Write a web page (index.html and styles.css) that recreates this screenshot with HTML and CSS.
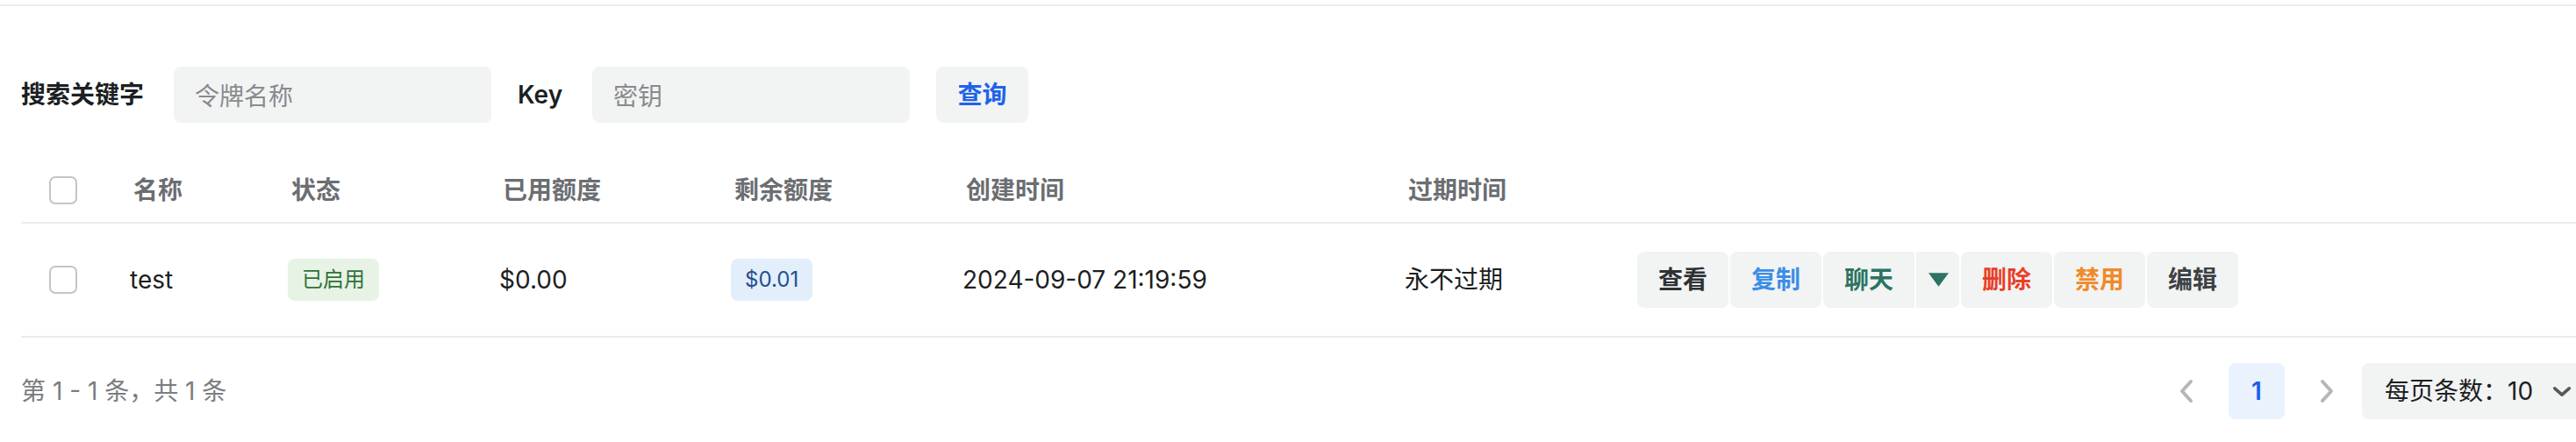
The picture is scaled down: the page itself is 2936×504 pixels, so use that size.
FILE: index.html
```html
<!DOCTYPE html>
<html lang="zh-CN">
<head>
<meta charset="utf-8">
<title>令牌</title>
<link rel="stylesheet" href="styles.css">
</head>
<body>
<div class="topline"></div>
<div class="page">
  <form class="search">
    <label class="search-label">搜索关键字</label>
    <div class="input"><span class="placeholder">令牌名称</span></div>
    <label class="search-label">Key</label>
    <div class="input"><span class="placeholder">密钥</span></div>
    <button type="button" class="btn btn-query">查询</button>
  </form>

  <div class="table">
    <div class="row head">
      <div class="cell"><span class="checkbox"></span></div>
      <div class="cell th">名称</div>
      <div class="cell th">状态</div>
      <div class="cell th">已用额度</div>
      <div class="cell th">剩余额度</div>
      <div class="cell th">创建时间</div>
      <div class="cell th">过期时间</div>
      <div class="cell th"></div>
    </div>
    <div class="row body">
      <div class="cell"><span class="checkbox"></span></div>
      <div class="cell">test</div>
      <div class="cell"><span class="tag tag-green">已启用</span></div>
      <div class="cell">$0.00</div>
      <div class="cell"><span class="tag tag-blue">$0.01</span></div>
      <div class="cell">2024-09-07 21:19:59</div>
      <div class="cell">永不过期</div>
      <div class="cell actions">
        <button type="button" class="btn c-view">查看</button>
        <button type="button" class="btn c-copy">复制</button>
        <button type="button" class="btn c-chat split-left">聊天</button>
        <button type="button" class="btn c-chat split-right"><svg class="tri" viewBox="0 0 24 16" width="23" height="16"><polygon points="0,0 24,0 12,16" fill="currentColor"/></svg></button>
        <button type="button" class="btn c-del">删除</button>
        <button type="button" class="btn c-disable">禁用</button>
        <button type="button" class="btn c-edit">编辑</button>
      </div>
    </div>
  </div>

  <div class="pager">
    <div class="pager-total">第 1 - 1 条，共 1 条</div>
    <div class="pager-right">
      <span class="page-item arrow"><svg viewBox="0 0 16 28" width="16" height="28"><polyline points="13,3 3,14 13,25" fill="none" stroke="currentColor" stroke-width="4" stroke-linecap="round" stroke-linejoin="round"/></svg></span>
      <span class="page-item current">1</span>
      <span class="page-item arrow"><svg viewBox="0 0 16 28" width="16" height="28"><polyline points="3,3 13,14 3,25" fill="none" stroke="currentColor" stroke-width="4" stroke-linecap="round" stroke-linejoin="round"/></svg></span>
      <div class="size-select">
        <span class="size-text">每页条数：10</span>
        <span class="size-arrow"><svg viewBox="0 0 24 14" width="22" height="13"><polyline points="3,3 12,11 21,3" fill="none" stroke="currentColor" stroke-width="4" stroke-linecap="round" stroke-linejoin="round"/></svg></span>
      </div>
    </div>
  </div>
</div>
</body>
</html>
```

FILE: styles.css
```css
html, body {
  margin: 0;
  padding: 0;
  background: #ffffff;
}
body {
  width: 2936px;
  height: 504px;
  overflow: hidden;
  font-family: "Inter", "Noto Sans CJK SC", sans-serif;
  font-size: 28px;
  color: #1c1f23;
}
.topline {
  margin-top: 5px;
  height: 2px;
  background: #ececec;
}
.page {
  width: 2928px;
  padding-left: 24px;
  box-sizing: content-box;
}

/* search form */
.search {
  display: flex;
  align-items: center;
  margin: 69px 0 0 0;
  height: 64px;
}
.search-label {
  font-weight: 600;
  color: #1c1f23;
  margin-right: 34px;
  line-height: 40px;
}
.input {
  width: 362px;
  height: 64px;
  box-sizing: border-box;
  background: #f2f3f3;
  border-radius: 8px;
  padding: 0 24px;
  display: flex;
  align-items: center;
  margin-right: 30px;
}
.placeholder {
  color: #888b8e;
}
.btn {
  font-family: inherit;
  font-size: 28px;
  font-weight: 600;
  height: 64px;
  border: none;
  background: #f2f3f3;
  border-radius: 8px;
  padding: 0 24px;
  display: inline-flex;
  align-items: center;
  justify-content: center;
  line-height: 40px;
  cursor: pointer;
}
.btn-query {
  color: #1f63ea;
  width: 105px;
}

/* table */
.table {
  margin-top: 41px;
}
.row {
  display: grid;
  grid-template-columns: 92px 180px 241px 264px 264px 504px 260px 1fr;
  align-items: center;
  padding-left: 32px;
  border-bottom: 2px solid #ececec;
}
.row.head {
  height: 72px;
}
.row.body {
  height: 128px;
}
.cell {
  display: flex;
  align-items: center;
  line-height: 40px;
  white-space: nowrap;
}
.th {
  font-weight: 600;
  color: #6b6e72;
  padding-left: 4px;
}
.checkbox {
  width: 32px;
  height: 32px;
  box-sizing: border-box;
  border: 2px solid #c3c6c9;
  border-radius: 7px;
  background: #fff;
}
.tag {
  display: inline-block;
  height: 48px;
  line-height: 48px;
  padding: 0 16px;
  font-size: 24px;
  border-radius: 8px;
}
.tag-green {
  background: #e6f3e5;
  color: #33703a;
}
.tag-blue {
  background: #e3eefb;
  color: #254f8f;
}

.actions {
  gap: 2px;
  margin-left: 5px;
}
.actions .btn {
  width: 104px;
}
.c-view { color: #2e3135; }
.c-copy { color: #3b8ee6; }
.c-chat { color: #2b7363; }
.c-del { color: #e83f28; }
.c-disable { color: #f08a28; }
.c-edit { color: #3d4145; }
.split-left {
  border-top-right-radius: 0;
  border-bottom-right-radius: 0;
}
.actions .split-right {
  width: 49px;
  padding: 0;
  border-top-left-radius: 0;
  border-bottom-left-radius: 0;
}
.tri {
  display: block;
  margin-left: 2px;
}

/* pagination */
.pager {
  display: flex;
  align-items: center;
  justify-content: space-between;
  margin-top: 29px;
  height: 64px;
}
.pager-total {
  color: #7a7d80;
  line-height: 40px;
}
.pager-right {
  display: flex;
  align-items: center;
}
.page-item {
  width: 64px;
  height: 64px;
  margin: 0 8px;
  border-radius: 8px;
  display: flex;
  align-items: center;
  justify-content: center;
}
.page-item.arrow {
  color: #b4b6b8;
}
.page-item.current {
  background: #eaf2fe;
  color: #1a5fe8;
  font-weight: 600;
}
.size-select {
  margin-left: 0;
  height: 64px;
  width: 260px;
  box-sizing: border-box;
  background: #f2f3f3;
  border-radius: 8px;
  padding-left: 26px;
  display: flex;
  align-items: center;
}
.size-text {
  color: #1c1f23;
  line-height: 40px;
}
.size-arrow {
  display: flex;
  align-items: center;
  margin-left: 22px;
  color: #55595e;
}
```
